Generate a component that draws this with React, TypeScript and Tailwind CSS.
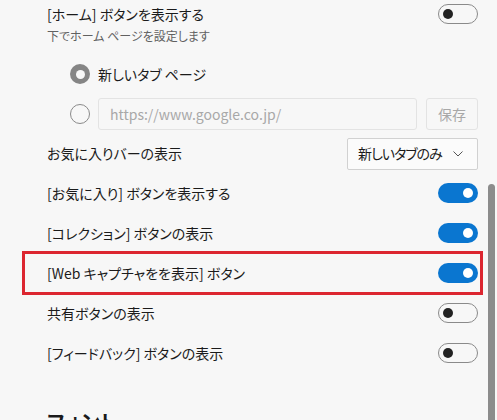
import React from "react";

const FONT = "font-['Noto_Sans_CJK_JP','Noto_Sans',sans-serif] [font-feature-settings:'palt']";

function Toggle({ on }: { on: boolean }) {
  return on ? (
    <div className="flex h-[20px] w-[40px] items-center justify-end rounded-full bg-[#0a76d0] pr-[5px]">
      <div className="h-[10px] w-[10px] rounded-full bg-white" />
    </div>
  ) : (
    <div className="flex h-[20px] w-[40px] items-center rounded-full border border-[#8a8a8a] pl-[4px]">
      <div className="h-[10px] w-[10px] rounded-full bg-[#222]" />
    </div>
  );
}

function ToggleRow({ label, on }: { label: string; on: boolean }) {
  return (
    <div className="flex h-[40px] items-center justify-between">
      <span className="text-[14px] text-[#1b1b1b]">{label}</span>
      <Toggle on={on} />
    </div>
  );
}

export default function App() {
  return (
    <div className={`flex h-[420px] w-[497px] overflow-hidden bg-[#f7f7f7] ${FONT}`}>
      <div className="flex-1 pl-[47px] pr-[10px]">
        <div className="flex h-[28px] items-center justify-between">
          <span className="text-[14px] text-[#1b1b1b]">[ホーム] ボタンを表示する</span>
          <Toggle on={false} />
        </div>
        <div className="h-[16px] text-[12px] leading-[16px] text-[#616161]">下でホーム ページを設定します</div>

        <div className="mt-[10px] flex h-[40px] items-center gap-[8px] pl-[23px]">
          <div className="flex h-[20px] w-[20px] items-center justify-center rounded-full bg-[#858585]">
            <div className="h-[9px] w-[9px] rounded-full bg-[#f7f7f7]" />
          </div>
          <span className="text-[14px] text-[#1b1b1b]">新しいタブ ページ</span>
        </div>

        <div className="flex h-[40px] items-center gap-[8px] pl-[23px]">
          <div className="h-[20px] w-[20px] shrink-0 rounded-full border border-[#8a8a8a]" />
          <div className="flex h-[32px] flex-1 items-center rounded-[3px] border border-[#e3e3e3] bg-[#f7f7f7] pl-[11px] text-[14px] text-[#a8a8a8]">
            https://www.google.co.jp/
          </div>
          <div className="ml-[1px] flex h-[32px] w-[52px] items-center justify-center rounded-[3px] border border-[#e3e3e3] text-[14px] text-[#a8a8a8]">
            保存
          </div>
        </div>

        <div className="flex h-[39px] items-center justify-between">
          <span className="text-[14px] text-[#1b1b1b]">お気に入りバーの表示</span>
          <div className="flex h-[32px] w-[131px] items-center justify-between rounded-[2px] border border-[#d1d1d1] bg-[#fbfbfb] pl-[10px] pr-[14px] text-[14px] text-[#1b1b1b]">
            <span className="tracking-[-1px]">新しいタブのみ</span>
            <svg width="10" height="6" viewBox="0 0 10 6" fill="none" stroke="#555" strokeWidth="1">
              <path d="M0.5 0.5 L5 5 L9.5 0.5" />
            </svg>
          </div>
        </div>

        <ToggleRow label="[お気に入り] ボタンを表示する" on />
        <ToggleRow label="[コレクション] ボタンの表示" on />
        <div className="-my-[2px] -ml-[25px] -mr-[5px] border-[3px] border-[#dc2630] pl-[22px] pr-[2px]">
          <div className="flex h-[38px] items-center justify-between">
            <span className="text-[14px] text-[#1b1b1b]">[Web キャプチャをを表示] ボタン</span>
            <Toggle on />
          </div>
        </div>
        <ToggleRow label="共有ボタンの表示" on={false} />
        <ToggleRow label="[フィードバック] ボタンの表示" on={false} />

        <div className="mt-[35px] text-[20px] font-semibold leading-[28px] text-[#1b1b1b]">フォント</div>
      </div>
      <div className="flex w-[9px] flex-col">
        <div className="h-[184px]" />
        <div className="w-[7px] flex-1 rounded-t-full bg-[#8c8c8c]" />
      </div>
    </div>
  );
}
